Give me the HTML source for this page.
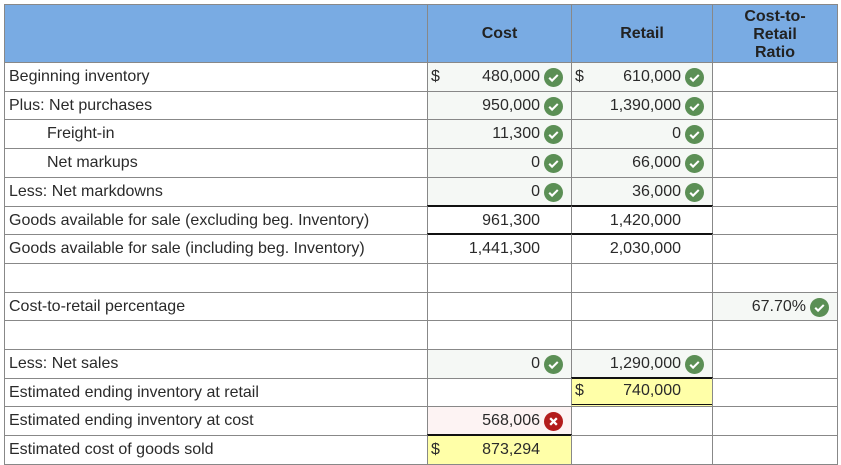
<!DOCTYPE html>
<html><head><meta charset="utf-8"><style>
*{margin:0;padding:0;box-sizing:border-box}
body{width:841px;height:461px;background:#fff;font-family:"Liberation Sans",Arial,sans-serif;font-size:16px;color:#2a2a2a;position:relative;overflow:hidden}
.c{position:absolute;border:1px solid #888;height:30px;line-height:28px;white-space:nowrap}
.a{left:4px;width:424px;padding-left:4px}
.b{left:427px;width:145px;text-align:right;padding-right:31px}
.r{left:571px;width:142px;text-align:right;padding-right:31px}
.t{left:712px;width:126px;text-align:right;padding-right:31px}
.h{background:#79abe3;font-weight:bold;text-align:center;padding:0;font-size:16px;color:#222}
.g{background:#f5f8f5}
.y{background:#ffffa8}
.p{background:#fdf3f3}
.ic{position:absolute;right:8px;top:5px;width:19px;height:19px}
.d{position:absolute;left:3px;top:0}
.ind{padding-left:42px}
.bt{border-top:2px solid #111}
</style></head><body>
<div class="c a h" style="top:4px;height:59px"></div>
<div class="c b h" style="top:4px;height:59px;line-height:57px">Cost</div>
<div class="c r h" style="top:4px;height:59px;line-height:57px">Retail</div>
<div class="c t h" style="top:4px;height:59px;line-height:18px;padding-top:3px">Cost-to-<br>Retail<br>Ratio</div>

<div class="c a" style="top:62px">Beginning inventory</div>
<div class="c b g" style="top:62px"><span class="d">$</span>480,000<svg class="ic" viewBox="0 0 20 20"><circle cx="10" cy="10" r="10" fill="#5b8f55"/><path d="M5.5 10.3l3 3 6-6" stroke="#fff" stroke-width="2.2" fill="none"/></svg></div>
<div class="c r g" style="top:62px"><span class="d">$</span>610,000<svg class="ic" viewBox="0 0 20 20"><circle cx="10" cy="10" r="10" fill="#5b8f55"/><path d="M5.5 10.3l3 3 6-6" stroke="#fff" stroke-width="2.2" fill="none"/></svg></div>
<div class="c t" style="top:62px"></div>

<div class="c a" style="top:91px;height:29px">Plus: Net purchases</div>
<div class="c b g" style="top:91px;height:29px">950,000<svg class="ic" viewBox="0 0 20 20"><circle cx="10" cy="10" r="10" fill="#5b8f55"/><path d="M5.5 10.3l3 3 6-6" stroke="#fff" stroke-width="2.2" fill="none"/></svg></div>
<div class="c r g" style="top:91px;height:29px">1,390,000<svg class="ic" viewBox="0 0 20 20"><circle cx="10" cy="10" r="10" fill="#5b8f55"/><path d="M5.5 10.3l3 3 6-6" stroke="#fff" stroke-width="2.2" fill="none"/></svg></div>
<div class="c t" style="top:91px;height:29px"></div>

<div class="c a ind" style="top:119px">Freight-in</div>
<div class="c b g" style="top:119px">11,300<svg class="ic" viewBox="0 0 20 20"><circle cx="10" cy="10" r="10" fill="#5b8f55"/><path d="M5.5 10.3l3 3 6-6" stroke="#fff" stroke-width="2.2" fill="none"/></svg></div>
<div class="c r g" style="top:119px">0<svg class="ic" viewBox="0 0 20 20"><circle cx="10" cy="10" r="10" fill="#5b8f55"/><path d="M5.5 10.3l3 3 6-6" stroke="#fff" stroke-width="2.2" fill="none"/></svg></div>
<div class="c t" style="top:119px"></div>

<div class="c a ind" style="top:148px">Net markups</div>
<div class="c b g" style="top:148px">0<svg class="ic" viewBox="0 0 20 20"><circle cx="10" cy="10" r="10" fill="#5b8f55"/><path d="M5.5 10.3l3 3 6-6" stroke="#fff" stroke-width="2.2" fill="none"/></svg></div>
<div class="c r g" style="top:148px">66,000<svg class="ic" viewBox="0 0 20 20"><circle cx="10" cy="10" r="10" fill="#5b8f55"/><path d="M5.5 10.3l3 3 6-6" stroke="#fff" stroke-width="2.2" fill="none"/></svg></div>
<div class="c t" style="top:148px"></div>

<div class="c a" style="top:177px">Less: Net markdowns</div>
<div class="c b g" style="top:177px">0<svg class="ic" viewBox="0 0 20 20"><circle cx="10" cy="10" r="10" fill="#5b8f55"/><path d="M5.5 10.3l3 3 6-6" stroke="#fff" stroke-width="2.2" fill="none"/></svg></div>
<div class="c r g" style="top:177px">36,000<svg class="ic" viewBox="0 0 20 20"><circle cx="10" cy="10" r="10" fill="#5b8f55"/><path d="M5.5 10.3l3 3 6-6" stroke="#fff" stroke-width="2.2" fill="none"/></svg></div>
<div class="c t" style="top:177px"></div>

<div class="c a" style="top:206px;height:29px">Goods available for sale (excluding beg. Inventory)</div>
<div class="c b bt" style="top:205px;height:30px;line-height:27px">961,300</div>
<div class="c r bt" style="top:205px;height:30px;line-height:27px">1,420,000</div>
<div class="c t" style="top:206px;height:29px"></div>

<div class="c a" style="top:234px">Goods available for sale (including beg. Inventory)</div>
<div class="c b bt" style="top:233px;height:31px;line-height:28px">1,441,300</div>
<div class="c r bt" style="top:233px;height:31px;line-height:28px">2,030,000</div>
<div class="c t" style="top:234px"></div>

<div class="c a" style="top:263px"></div>
<div class="c b" style="top:263px"></div>
<div class="c r" style="top:263px"></div>
<div class="c t" style="top:263px"></div>

<div class="c a" style="top:292px;height:29px">Cost-to-retail percentage</div>
<div class="c b" style="top:292px;height:29px"></div>
<div class="c r" style="top:292px;height:29px"></div>
<div class="c t g" style="top:292px;height:29px">67.70%<svg class="ic" viewBox="0 0 20 20"><circle cx="10" cy="10" r="10" fill="#5b8f55"/><path d="M5.5 10.3l3 3 6-6" stroke="#fff" stroke-width="2.2" fill="none"/></svg></div>

<div class="c a" style="top:320px"></div>
<div class="c b" style="top:320px"></div>
<div class="c r" style="top:320px"></div>
<div class="c t" style="top:320px"></div>

<div class="c a" style="top:349px">Less: Net sales</div>
<div class="c b g" style="top:349px">0<svg class="ic" viewBox="0 0 20 20"><circle cx="10" cy="10" r="10" fill="#5b8f55"/><path d="M5.5 10.3l3 3 6-6" stroke="#fff" stroke-width="2.2" fill="none"/></svg></div>
<div class="c r g" style="top:349px">1,290,000<svg class="ic" viewBox="0 0 20 20"><circle cx="10" cy="10" r="10" fill="#5b8f55"/><path d="M5.5 10.3l3 3 6-6" stroke="#fff" stroke-width="2.2" fill="none"/></svg></div>
<div class="c t" style="top:349px"></div>

<div class="c a" style="top:378px;height:29px">Estimated ending inventory at retail</div>
<div class="c b" style="top:378px;height:29px"></div>
<div class="c r y" style="top:377px;height:30px;border-top:2px solid #111;border-bottom:3px double #111;line-height:24px"><span class="d">$</span>740,000</div>
<div class="c t" style="top:378px;height:29px"></div>

<div class="c a" style="top:406px">Estimated ending inventory at cost</div>
<div class="c b p" style="top:406px">568,006<svg class="ic" viewBox="0 0 20 20"><circle cx="10" cy="10" r="10" fill="#b31b1b"/><path d="M6.5 6.5l7 7M13.5 6.5l-7 7" stroke="#fff" stroke-width="2.4" fill="none"/></svg></div>
<div class="c r" style="top:406px"></div>
<div class="c t" style="top:406px"></div>

<div class="c a" style="top:435px">Estimated cost of goods sold</div>
<div class="c b y bt" style="top:434px;height:31px;line-height:28px"><span class="d">$</span>873,294</div>
<div class="c r" style="top:435px"></div>
<div class="c t" style="top:435px"></div>
</body></html>
